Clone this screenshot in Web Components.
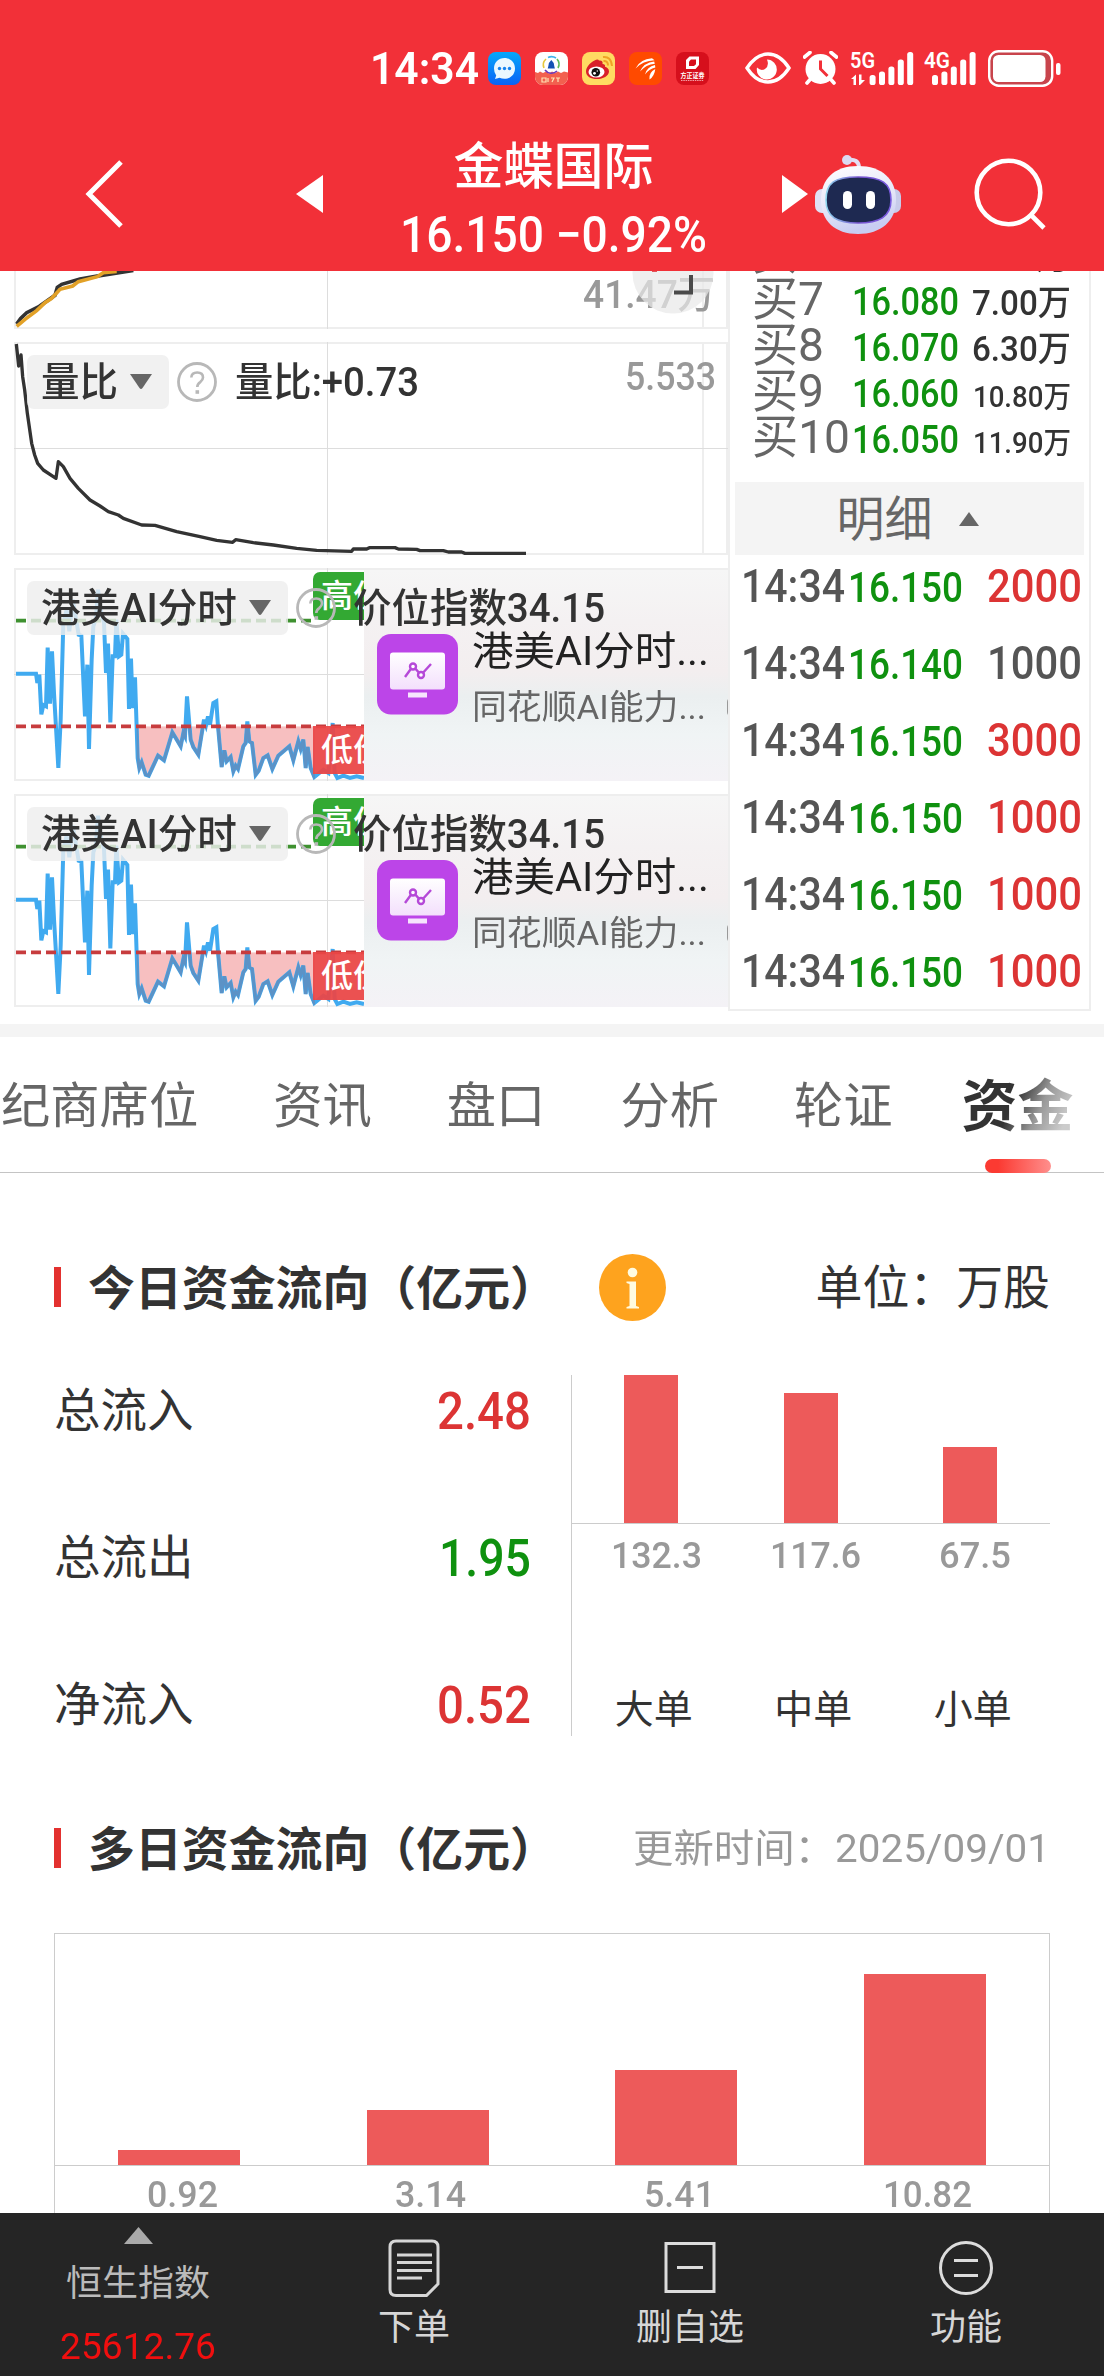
<!DOCTYPE html>
<html lang="zh-CN">
<head>
<meta charset="UTF-8">
<title>金蝶国际</title>
<style>
  html, body { margin: 0; padding: 0; }
  body {
    width: 1104px;
    height: 2376px;
    overflow: hidden;
    background: #fff;
    color: #333;
    font-family: Roboto, "Noto Sans CJK SC", sans-serif;
    line-height: 1;
  }
</style>
</head>
<body>
<stock-app></stock-app>

<script>
// 公共基类：把样式和模板写进 shadow root
class BaseElement extends HTMLElement {
  constructor() {
    super();
    this.attachShadow({ mode: 'open' });
  }
  connectedCallback() {
    this.shadowRoot.innerHTML = `<style>:host{display:block;box-sizing:border-box}*{box-sizing:border-box}svg{display:block;flex:none}${this.css()}</style>${this.html()}`;
  }
  css() { return ''; }
  html() { return ''; }
}

// 定宽文字：按 w 横向压缩，数字用窄体效果
class FitText extends HTMLElement {
  constructor() {
    super();
    this.attachShadow({ mode: 'open' });
    this.shadowRoot.innerHTML = `
      <style>
        :host { display: inline-block; white-space: nowrap; line-height: 1; flex: none; }
        span { display: inline-block; transform-origin: 0 50%; }
      </style>
      <span><slot></slot></span>
    `;
  }
  connectedCallback() {
    const w = Number(this.getAttribute('w'));
    const span = this.shadowRoot.querySelector('span');
    this.style.width = w + 'px';
    span.style.transform = `scaleX(${w / span.getBoundingClientRect().width})`;
  }
}

class StatusBar extends BaseElement {
  css() {
    return `
      :host { display: flex; align-items: center; height: 117px; padding: 19px 0 0 370px; color: #fff; }
      fit-text { font-size: 45px; font-weight: 600; }
      .apps { display: flex; gap: 14px; margin-left: 9px; }
      .eye { margin-left: 36px; }
      .gap { margin-left: 12px; }
      text { font-family: Roboto, "Noto Sans CJK SC", sans-serif; }
    `;
  }
  bars(x, tops) {
    return tops.map((t, i) => `<rect x="${x + i * 9.4}" y="${t}" width="6" height="${34 - t}" rx="2.6"/>`).join('');
  }
  html() {
    return `
      <fit-text w="109">14:34</fit-text>
      <div class="apps">
        <svg width="33" height="33" viewBox="0 0 33 33">
          <defs><linearGradient id="b" x2="0" y2="1"><stop stop-color="#06a8fb"/><stop offset="1" stop-color="#0a62f5"/></linearGradient></defs>
          <rect width="33" height="33" rx="8" fill="url(#b)"/>
          <path d="M16.500 6C10.500 6 6 10.500 6 16.500q0 4 2.200 7l-1.200 3.600 4.500-1.300q2.500 1 5 1C22.500 26.800 27 22.500 27 16.500S22.500 6 16.500 6z" fill="#eaf8ff"/>
          <g fill="#1482ee"><circle cx="11.500" cy="16.500" r="1.700"/><circle cx="16.500" cy="16.500" r="1.700"/><circle cx="21.500" cy="16.500" r="1.700"/></g>
        </svg>
        <svg width="33" height="33" viewBox="0 0 33 33">
          <rect width="33" height="33" rx="8" fill="#fff"/>
          <path d="M0 20l3 1 2-1.500 3 1.500 3-1.500 3 2 3-2 3 1.500 3-1.500 3 1.500 3-1.500 4 1V25a8 8 0 0 1-8 8H8a8 8 0 0 1-8-8z" fill="#f2604f"/>
          <g fill="none" stroke-width="1.600"><path d="M11 7a8 8 0 0 0-2 9" stroke="#e7c83d"/><path d="M13 5.500a8 8 0 0 1 8 .500" stroke="#3fb2e8"/><path d="M22 7a8 8 0 0 1 1 9" stroke="#5fbc5a"/><path d="M10 18a8 8 0 0 0 12 1" stroke="#6a3bbd"/></g>
          <path d="M16.300 8q3 2.500 3 6.200l.600 2.300h-7.200l.600-2.300q0-3.700 3-6.200z" fill="#1552b4"/>
          <path d="M7 26h4v4H7zM13 26v4m3-4h3l-2 4m4-4h4m-2 0v4" stroke="#ffe3b5" fill="none" stroke-width="1.200"/>
        </svg>
        <svg width="33" height="33" viewBox="0 0 33 33">
          <rect width="33" height="33" rx="8" fill="#ffdb62"/>
          <path d="M20.500 12q.800-4-3.500-3.500-1-2-4.500 0C7.500 11 4 15.500 4 19.500 4 24.500 9 27 15 27s12-3.300 12-7.600c0-3-2.200-4.200-4-4.700q.500-2.700-2.500-2.700z" fill="#d9202a"/>
          <ellipse cx="14.500" cy="20" rx="8" ry="5.600" fill="#fff"/>
          <circle cx="13.800" cy="20.300" r="4.300" fill="#111"/><circle cx="12.500" cy="21.300" r="1.400" fill="#fff"/><circle cx="15.300" cy="19" r=".7" fill="#fff"/>
          <path d="M21 5q8-1 9 9M21.500 9q4.500-.300 4.500 4.500" fill="none" stroke="#f0a325" stroke-width="2"/>
        </svg>
        <svg width="33" height="33" viewBox="0 0 33 33">
          <rect width="33" height="33" rx="8" fill="#ff4a00"/>
          <g fill="#fff">
            <path d="M6.500 16.500Q11 7 23 6.200l2.500 2Q14 8.500 6.500 16.500z"/>
            <path d="M11 19.500Q15 10.500 25.200 9.500l.600 2.200Q17 12.500 11 19.500z"/>
            <path d="M16 22.500Q18 14.500 26 13l.300 2.600Q20 17 16 22.500z"/>
            <path d="M20.500 27.500Q19.500 20.500 26.300 17 25.500 24 20.500 27.500z"/>
          </g>
        </svg>
        <svg width="33" height="33" viewBox="0 0 33 33">
          <rect width="33" height="33" rx="8" fill="#d60f1c"/>
          <path d="M13.500 4.500H23v8.500l-3.500 4H10V8z" fill="#fff"/><path d="M15 7.500h5v4.800L18 14h-5V9.500z" fill="#d60f1c"/>
          <text x="4.500" y="26" font-size="6.500" font-weight="700" fill="#fff" textLength="24" lengthAdjust="spacingAndGlyphs">方正证券</text>
          <path d="M5 28.500h23" stroke="#f2a0a5" stroke-width="1" stroke-dasharray="1.500 .8"/>
        </svg>
      </div>
      <svg class="eye" width="46" height="32" viewBox="0 0 46 32">
        <path d="M2 16Q11 2 23 2t21 14Q35 30 23 30T2 16z" fill="none" stroke="#fff" stroke-width="3.400"/>
        <path d="M22 7.500a10 10 0 1 1-10 8q4 4 8 1.500 4.500-3 2-9.500z" fill="#fff"/>
      </svg>
      <svg class="gap" width="35" height="34" viewBox="0 0 35 34">
        <circle cx="17.500" cy="18" r="15" fill="#fff"/>
        <path d="M1.500 6L7 1.500M28 1.500L33.500 6M7.500 28L4 32M27.500 28l3.500 4" stroke="#fff" stroke-width="3.600" stroke-linecap="round"/>
        <path d="M17.500 9.500V18l7 7" fill="none" stroke="#f23038" stroke-width="3"/>
      </svg>
      <svg class="gap" width="63" height="34" viewBox="0 0 63 34" fill="#fff" style="overflow:visible">
        <text x="0" y="16.500" font-size="22" font-weight="600" textLength="25" lengthAdjust="spacingAndGlyphs">5G</text>
        <path d="M1 28l5-4.500V34H3.500v-6zM9 23.500h2.500V29H15l-5 5H9z"/>
        ${this.bars(19.600, [24, 20.500, 15.500, 8.500, 1])}
      </svg>
      <svg style="margin-left:11px;overflow:visible" width="53" height="34" viewBox="0 0 53 34" fill="#fff">
        <text x="0" y="16.500" font-size="22" font-weight="600" textLength="26" lengthAdjust="spacingAndGlyphs">4G</text>
        ${this.bars(8, [24, 20.500, 15.500, 8.500, 1])}
      </svg>
      <svg style="margin-left:11px" width="73" height="37" viewBox="0 0 73 37">
        <rect x="1.200" y="1.200" width="63" height="34.500" rx="9.500" fill="#c8444c" stroke="#fff" stroke-width="2.400"/>
        <rect x="5" y="5" width="52.500" height="27" rx="5.500" fill="#fff"/>
        <rect x="68" y="13" width="4.500" height="12" rx="2" fill="#fff"/>
      </svg>
    `;
  }
}

class StockHeader extends BaseElement {
  css() {
    return `
      :host { height: 271px; background: #f23038; color: #fff; }
      nav { display: flex; align-items: center; height: 154px; padding-left: 85px; }
      .title { display: flex; flex-direction: column; align-items: center; gap: 18px; width: 309px; margin-left: 76px; padding-top: 14px; }
      .name { font-size: 50px; font-weight: 500; white-space: nowrap; }
      fit-text { font-size: 50px; font-weight: 500; }
    `;
  }
  html() {
    return `
      <status-bar></status-bar>
      <nav>
        <svg width="38" height="68" viewBox="0 0 38 68"><path d="M36 2L4 34l32 32" fill="none" stroke="#fff" stroke-width="5"/></svg>
        <svg style="margin-left:173px" width="27" height="40" viewBox="0 0 27 40"><path d="M27 1v38L0 20z" fill="#fff"/></svg>
        <div class="title">
          <span class="name">金蝶国际</span>
          <fit-text w="307">16.150 −0.92%</fit-text>
        </div>
        <svg style="margin-left:74px" width="27" height="40" viewBox="0 0 27 40"><path d="M0 1v38l26-19z" fill="#fff"/></svg>
        <svg style="margin-left:5px" width="88" height="84" viewBox="0 0 88 84">
          <defs>
            <linearGradient id="head" x2=".3" y2="1"><stop stop-color="#fff"/><stop offset=".6" stop-color="#e6e6f8"/><stop offset="1" stop-color="#c8cdf2"/></linearGradient>
            <linearGradient id="rim"><stop stop-color="#8fd6ee"/><stop offset=".5" stop-color="#7654cf"/><stop offset="1" stop-color="#7a5be0"/></linearGradient>
          </defs>
          <path d="M33 8q12-2 12 8" fill="none" stroke="#e3ddf3" stroke-width="4"/>
          <circle cx="33" cy="8" r="5" fill="#dcdaf2"/>
          <rect x="1" y="37" width="15" height="24" rx="7" fill="#dfe1f5"/><rect x="72" y="37" width="15" height="24" rx="7" fill="#c7cbea"/>
          <path d="M44 14c24 0 38 13 38 34S67 82 44 82 7 69 7 48s13-34 37-34z" fill="url(#head)"/>
          <path d="M44 25c24 0 33 6 33 23S65 71 44 71 12 65 12 48s8-23 32-23z" fill="#1e2951" stroke="url(#rim)" stroke-width="1.600"/>
          <rect x="29" y="39" width="9" height="18" rx="4.500" fill="#fff"/><rect x="52" y="39" width="9" height="18" rx="4.500" fill="#fff"/>
        </svg>
        <svg style="margin-left:71px" width="74" height="74" viewBox="0 0 74 74" fill="none" stroke="#fff" stroke-width="4.600">
          <circle cx="35.500" cy="35.500" r="31.800"/><path d="M58 58l13 13"/>
        </svg>
      </nav>
    `;
  }
}

// 图表上的指标标签行
class IndicatorLabel extends BaseElement {
  css() {
    return `
      :host { display: flex; align-items: center; height: 54px; color: #333; }
      .pill { display: flex; align-items: center; height: 54px; padding: 0 17px 0 14px; border-radius: 7px; background: rgba(238,238,238,.82); }
      fit-text { font-size: 40px; font-weight: 500; padding-top: 2px; }
      .arrow { margin-left: 12px; }
      .help { margin-left: 8px; }
    `;
  }
  html() {
    return `
      <div class="pill">
        <fit-text w="${this.getAttribute('name-width')}">${this.getAttribute('name')}</fit-text>
        <svg class="arrow" width="22" height="16" viewBox="0 0 22 16"><path d="M0 0h22L12.500 14q-1.500 2-3 0z" fill="#666"/></svg>
      </div>
      <svg class="help" width="40" height="40" viewBox="0 0 40 40" fill="none" stroke="#b8b8b8">
        <circle cx="20" cy="20" r="18.500" stroke-width="2.800"/>
        <path d="M14.300 15.500q.300-5 5.900-5 5.800 0 5.800 5 0 2.500-2.800 4.600-2.900 2-2.900 5" stroke-width="2.600"/><path d="M18.500 30h3.600" stroke-width="3.600"/>
      </svg>
      <fit-text style="margin-left:${this.getAttribute('gap')}px" w="${this.getAttribute('value-width')}">${this.getAttribute('value')}</fit-text>
    `;
  }
}

const grid = (top, bottom) => `
  <g fill="none" stroke="#eee" stroke-width="6">
    <path d="M42 ${top + 3}H2184M42 ${bottom - 3}H2184M45 ${top}V${bottom}M2109 ${top}V${bottom}M2181 ${top}V${bottom}"/>
    <path d="M982.500 ${top}V${bottom}M42 ${(top + bottom) / 2}H2184" stroke="#ddd" stroke-width="3"/>
  </g>`;

class VolumeChart extends BaseElement {
  css() {
    return `
      :host { position: relative; height: 58px; overflow: hidden; color: #999; }
      fit-text { position: absolute; left: 569px; top: 5px; font-size: 39px; font-weight: 500; }
      .float { position: absolute; left: 618px; top: 0; }
    `;
  }
  html() {
    return `
      <svg width="714" height="58" viewBox="42 33 2142 174">
        <path d="M45 33V207M2109 33V207M2181 33V207M42 204H2184" stroke="#eee" stroke-width="6"/>
        <path d="M982.500 33V207" stroke="#ddd" stroke-width="3"/>
        <path d="M50 192L62 175 80 158 118 139 165 106 172 82 185 73 240 57 300 47 400 31" fill="none" stroke="#333" stroke-width="11"/>
        <path d="M50 199L75 178 110 152 135 128 155 115 180 88 218 78 235 65 292 50 310 38 350 34" fill="none" stroke="#e2a127" stroke-width="11"/>
      </svg>
      <fit-text w="132">41.47万</fit-text>
      <svg class="float" width="82" height="44" viewBox="0 0 82 44">
        <circle cx="41" cy="2" r="40.500" fill="#e8e8e8" fill-opacity=".7"/>
        <path d="M42 21.500H59V4" fill="none" stroke="#4a4a4a" stroke-width="4"/>
        <path d="M20 0h5" stroke="#e0555b" stroke-width="2"/>
      </svg>
    `;
  }
}

class RatioChart extends BaseElement {
  css() {
    return `
      :host { position: relative; height: 213px; }
      indicator-label { position: absolute; left: 13px; top: 13px; }
      .max { position: absolute; right: 12px; top: 16px; font-size: 39px; font-weight: 500; color: #999; }
    `;
  }
  html() {
    return `
      <svg width="714" height="213" viewBox="42 246 2142 639">
        ${grid(246, 885)}
        <path d="M49 252L56 318 63 285 68 350 74 390 82 460 95 550 104 585 113 610 130 630 168 655 175 605 190 620 210 655 235 685 270 720 300 738 325 755 355 765 370 775 425 795 465 796 530 815 600 830 650 841 698 847 707 839 760 848 820 855 890 865 950 871 1055 874 1060 867 1100 867 1108 863 1185 863 1195 867 1250 868 1260 872 1330 872 1345 876 1385 876 1395 880 1578 880" fill="none" stroke="#333" stroke-width="10" stroke-linejoin="round"/>
      </svg>
      <indicator-label name="量比" name-width="77" value="量比:+0.73" value-width="184" gap="18"></indicator-label>
      <fit-text class="max" w="91">5.533</fit-text>
    `;
  }
}

class AiChart extends BaseElement {
  css() {
    return `
      :host { position: relative; height: 213px; }
      indicator-label { position: absolute; left: 13px; top: 13px; }
      .badge { position: absolute; left: 299px; width: 51px; height: 48px; overflow: hidden; padding: 8px 0 0 8px; font-size: 32px; font-weight: 500; color: #fff; white-space: nowrap; }
      .high { top: 4px; background: #33a933; border-radius: 7px 0 0 7px; }
      .low { top: 158px; background: rgba(234,70,70,.94); }
      .card {
        position: absolute; left: 350px; top: 0; width: 364px; height: 213px; overflow: hidden;
        display: flex; gap: 14px; padding: 64px 0 0 13px;
        background: linear-gradient(#f6f6f6, #f4f1f2 24%, #f3eeef 48%, #ebeff0 60%, #f0f4f5 78%, #f4f2f6);
        border-top: 2px solid #eee;
      }
      .lines { display: flex; flex-direction: column; gap: 18px; margin-top: -2px; }
      .lines :first-child { font-size: 40px; color: #222; }
      .lines :last-child { font-size: 34px; color: #666; }
      .tag { width: 20px; height: 20px; margin: 63px 0 0 4px; border: 2px solid #999; border-radius: 5px; flex: none; }
    `;
  }
  html() {
    // 曲线坐标为 3 倍像素
    const line = '48 342 108 342 112 370 118 345 124 464 130 436 138 440 143 264 150 432 156 275 162 400 175 625 182 480 190 190 200 150 208 215 218 120 230 190 236 225 244 228 255 470 262 315 267 568 275 300 280 200 288 175 294 90 302 150 312 190 318 340 324 252 331 488 338 290 345 290 349 180 357 290 364 285 369 222 382 238 387 448 393 297 398 445 405 353 413 595 418 625 425 608 437 645 446 648 474 588 492 602 517 518 542 560 550 520 555 530 561 410 572 540 580 562 595 585 608 505 612 480 618 497 624 470 630 495 640 430 649 425 654 500 665 622 673 572 680 605 692 592 700 635 707 618 714 628 730 560 737 550 742 485 748 545 756 550 767 645 776 633 790 595 803 587 817 628 835 588 868 560 880 602 895 545 902 568 910 540 917 625 923 562 932 625 943 652 970 630 985 640 998 490 1004 640 1012 655 1030 648 1050 655 1070 650 1092 655';
    return `
      <svg width="714" height="213" viewBox="42 25 2142 639">
        <defs><clipPath id="under"><rect x="410" y="500" width="535" height="160"/></clipPath></defs>
        ${grid(25, 664)}
        <polygon clip-path="url(#under)" points="48 500 ${line} 1092 500" fill="#f7bfc0"/>
        <polyline points="${line}" fill="none" stroke="#40aaf0" stroke-width="12"/>
        <polyline clip-path="url(#under)" points="${line}" fill="none" stroke="#6689b8" stroke-width="9" opacity=".75"/>
        <path d="M48 183H940" stroke="#3f9130" stroke-width="11" stroke-dasharray="30 15"/>
        <path d="M48 500H1092" stroke="#c73c3e" stroke-width="11" stroke-dasharray="30 15"/>
      </svg>
      <div class="badge high">高价</div>
      <div class="badge low">低价</div>
      <div class="card">
        <svg width="81" height="81" viewBox="0 0 81 81">
          <defs><linearGradient id="m" x2="0" y2="1"><stop stop-color="#fff"/><stop offset="1" stop-color="#f3dffc"/></linearGradient></defs>
          <rect width="81" height="80.500" rx="14" fill="#bc45e8"/>
          <rect x="13" y="18.500" width="55" height="37" rx="3" fill="url(#m)"/><rect x="31" y="58.500" width="19" height="5" fill="#f6e4fd"/>
          <g fill="#fff" stroke="#b549d8" stroke-width="2.400"><path d="M28 43l8-11 8 9 10-11" fill="none"/><circle cx="36" cy="32.500" r="3"/><circle cx="44" cy="41" r="3"/></g>
        </svg>
        <div class="lines"><fit-text w="237">港美AI分时...</fit-text><fit-text w="234">同花顺AI能力...</fit-text></div>
        <i class="tag"></i>
      </div>
      <indicator-label name="港美AI分时" name-width="196" value="价位指数34.15" value-width="252" gap="17"></indicator-label>
    `;
  }
}

class OrderBook extends BaseElement {
  css() {
    return `
      :host { width: 363px; height: 740px; overflow: hidden; border: 2px solid #eee; border-top: 0; }
      .bids { margin-top: -42px; height: 253px; }
      .bid { display: grid; grid-template-columns: 100px 120px 1fr; align-items: baseline; height: 46px; padding: 0 18px 0 22px; line-height: 46px; }
      .bid .label { font-size: 47px; color: #666; white-space: nowrap; }
      .bid .price { font-size: 39px; font-weight: 500; color: #0f910f; }
      .bid .vol { font-weight: 500; justify-self: end; }
      .head { display: flex; justify-content: center; align-items: center; gap: 26px; height: 73px; margin: 0 5px; padding: 3px 4px 0 0; background: #f4f4f4; color: #666; font-size: 48px; }
      .head svg { margin-top: -3px; }
      .trade { display: flex; align-items: baseline; height: 77px; padding: 7px 7px 0 11px; font-size: 47px; }
      .trade .price { margin-left: 3px; font-size: 42px; font-weight: 500; color: #0f910f; }
      .time { color: #555; font-weight: 500; }
      .vol2 { margin-left: auto; }
    `;
  }
  html() {
    const bids = [['买6', '', '万', 35, 35], ['买7', '16.080', '7.00万', 35, 99], ['买8', '16.070', '6.30万', 35, 99], ['买9', '16.060', '10.80万', 30, 98], ['买10', '16.050', '11.90万', 30, 98]];
    const trades = [['16.150', '2000', '#dc3434'], ['16.140', '1000', '#555'], ['16.150', '3000', '#dc3434'], ['16.150', '1000', '#dc3434'], ['16.150', '1000', '#dc3434'], ['16.150', '1000', '#dc3434']];
    return `
      <div class="bids">
        ${bids.map(([n, p, v, size, w]) => `
          <div class="bid">
            <fit-text class="label" w="${n.length > 2 ? 98 : 72}">${n}</fit-text>
            ${p ? `<fit-text class="price" w="107">${p}</fit-text>` : '<span></span>'}
            <fit-text class="vol" style="font-size:${size}px" w="${w}">${v}</fit-text>
          </div>`).join('')}
      </div>
      <div class="head">明细<svg width="20" height="14" viewBox="0 0 20 14"><path d="M10 0l10 14H0z" fill="#666"/></svg></div>
      ${trades.map(([p, v, c]) => `
        <div class="trade">
          <fit-text class="time" w="104">14:34</fit-text>
          <fit-text class="price" w="115">${p}</fit-text>
          <fit-text class="vol2" style="color:${c};font-weight:500" w="95">${v}</fit-text>
        </div>`).join('')}
    `;
  }
}

class QuotePanel extends BaseElement {
  css() {
    return `
      :host { display: flex; height: 766px; padding-left: 14px; border-bottom: 13px solid #f4f4f4; }
      .charts { display: flex; flex-direction: column; width: 714px; gap: 13px; }
    `;
  }
  html() {
    return `
      <div class="charts">
        <volume-chart></volume-chart>
        <ratio-chart></ratio-chart>
        <ai-chart></ai-chart>
        <ai-chart></ai-chart>
      </div>
      <order-book></order-book>
    `;
  }
}

class TabBar extends BaseElement {
  css() {
    return `
      :host { display: flex; align-items: center; gap: 75px; height: 136px; padding: 4px 0 0 1px; border-bottom: 1px solid #c4c4c4; font-size: 49.300px; color: #666; white-space: nowrap; }
      .active { position: relative; margin-left: -6px; font-size: 56px; font-weight: 700; }
      .active span { color: transparent; background: linear-gradient(115deg, #333 45%, #999 66%, #ccc 88%); -webkit-background-clip: text; background-clip: text; }
      .active i { position: absolute; left: 23px; bottom: -38px; width: 66px; height: 14px; border-radius: 7px; background: linear-gradient(90deg, #fb3a32 20%, #ff8f8d); }
    `;
  }
  html() {
    return `
      <span>纪商席位</span><span>资讯</span><span>盘口</span><span>分析</span><span>轮证</span>
      <div class="active"><span>资金</span><i></i></div>
    `;
  }
}

class SectionTitle extends BaseElement {
  css() {
    return `
      :host { display: flex; align-items: center; height: 68px; font-size: 46.900px; }
      i { width: 7px; height: 40px; background: #e3312f; margin-right: 27px; }
      b { font-weight: 700; white-space: nowrap; padding-top: 4px; }
      .side { flex: 1; display: flex; align-items: center; }
    `;
  }
  html() {
    return `<i></i><b><slot></slot></b><div class="side"><slot name="side"></slot></div>`;
  }
}

class FundFlow extends BaseElement {
  css() {
    return `
      :host { padding: 80px 54px 0; }
      .info { margin-left: 42px; }
      .today { display: flex; height: 361px; margin-top: 54px; }
      .totals { display: flex; flex-direction: column; width: 518px; padding: 10px 40px 0 0; border-right: 1px solid #ccc; }
      .totals div { display: flex; justify-content: space-between; align-items: center; height: 53px; margin-bottom: 94px; font-size: 46.500px; }
      .totals fit-text { font-size: 52px; font-weight: 500; padding-top: 1px; }
      .bars { display: grid; grid-template-columns: repeat(3, 159.500px); flex: 1; }
      .bars > div { display: flex; flex-direction: column; align-items: center; }
      .plot { display: flex; align-items: flex-end; justify-content: center; width: 160px; height: 149px; border-bottom: 1px solid #ccc; }
      .bar { background: #ed5a5a; }
      .num { margin: 13px 0 0 10px; font-size: 37px; font-weight: 500; color: #999; }
      .kind { margin: 117px 0 0 5px; font-size: 39px; }
      .date { font-size: 38.500px; color: #999; padding-top: 2px; }
      .multi { display: grid; grid-template-columns: repeat(4, 1fr); margin-top: 51px; height: 290px; border: 1px solid #ccc; border-bottom: 0; }
      .multi > div { display: flex; flex-direction: column; align-items: center; }
      .multi .plot { width: 100%; height: 232px; }
      .multi .num { margin: 10px 0 0 6px; }
    `;
  }
  html() {
    const totals = [['总流入', '2.48', '#dc3434', 94], ['总流出', '1.95', '#0f910f', 92], ['净流入', '0.52', '#dc3434', 94]];
    const orders = [['大单', '132.3', 148, 91], ['中单', '117.6', 130, 91], ['小单', '67.5', 76, 72]];
    const days = [['0.92', 15, 71], ['3.14', 55, 71], ['5.41', 95, 71], ['10.82', 191, 89]];
    return `
      <section-title>今日资金流向（亿元）
        <svg slot="side" class="info" width="67" height="67" viewBox="0 0 67 67">
          <circle cx="33.500" cy="33.500" r="33.500" fill="#fea31e"/>
          <circle cx="33.500" cy="18.500" r="4.800" fill="#fffbe0"/>
          <path d="M27.500 27.500h9.500v24.500l3 1v1.500H27.500v-1.500l3-1V30l-3-1z" fill="#fffbe0"/>
        </svg>
        <span slot="side" style="margin-left:auto;padding-top:3px;white-space:nowrap">单位：万股</span>
      </section-title>
      <div class="today">
        <div class="totals">${totals.map(([k, v, c, w]) => `<div>${k}<fit-text style="color:${c}" w="${w}">${v}</fit-text></div>`).join('')}</div>
        <div class="bars">${orders.map(([k, v, h, w]) => `
          <div>
            <div class="plot"><div class="bar" style="width:54px;height:${h}px"></div></div>
            <fit-text class="num" w="${w}">${v}</fit-text>
            <span class="kind">${k}</span>
          </div>`).join('')}</div>
      </div>
      <section-title style="margin-top:78px">多日资金流向（亿元）
        <fit-text slot="side" class="date" style="margin-left:auto" w="417">更新时间：2025/09/01</fit-text>
      </section-title>
      <div class="multi">${days.map(([v, h, w]) => `
        <div>
          <div class="plot"><div class="bar" style="width:122px;height:${h}px"></div></div>
          <fit-text class="num" w="${w}">${v}</fit-text>
        </div>`).join('')}</div>
    `;
  }
}

class BottomBar extends BaseElement {
  css() {
    return `
      :host { position: absolute; left: 0; top: 2213px; width: 1104px; height: 163px; display: grid; grid-template-columns: repeat(4, 276px); background: #252525; color: #d6d6d6; font-size: 36px; }
      div { display: flex; flex-direction: column; align-items: center; }
      .index { color: #bbb; padding-top: 14px; }
      .index span { margin-top: 22px; }
      .index fit-text { margin-top: 26px; font-size: 37px; color: #f00f0f; }
      .item { padding-top: 25px; }
      .item span { margin-top: 12px; }
    `;
  }
  html() {
    return `
      <div class="index">
        <svg width="29" height="17" viewBox="0 0 29 17"><path d="M14.500 0L29 17H0z" fill="#aaa"/></svg>
        <span>恒生指数</span>
        <fit-text w="156">25612.76</fit-text>
      </div>
      <div class="item">
        <svg width="52" height="60" viewBox="0 0 52 60" fill="none" stroke="#d6d6d6" stroke-width="3">
          <path d="M8 3h36q6 0 6 6v37L38.500 57.500H8q-6 0-6-6V9q0-6 6-6z"/>
          <path d="M9 17h35M9 24.500h35M9 32.500h35M9 40h25"/>
        </svg>
        <span>下单</span>
      </div>
      <div class="item">
        <svg width="52" height="60" viewBox="0 0 52 60" fill="none" stroke="#dcdcdc" stroke-width="3"><path d="M2 5.500h48v48H2zM13 29.500h26"/></svg>
        <span>删自选</span>
      </div>
      <div class="item">
        <svg width="56" height="60" viewBox="0 0 56 60" fill="none" stroke="#dcdcdc" stroke-width="3"><circle cx="28" cy="30" r="25.500"/><path d="M16 22.500h24M16 37.500h24"/></svg>
        <span>功能</span>
      </div>
    `;
  }
}

class StockApp extends BaseElement {
  css() { return ':host { position: relative; width: 1104px; height: 2376px; overflow: hidden; }'; }
  html() {
    return `
      <stock-header></stock-header>
      <quote-panel></quote-panel>
      <tab-bar></tab-bar>
      <fund-flow></fund-flow>
      <bottom-bar></bottom-bar>
    `;
  }
}

customElements.define('fit-text', FitText);
customElements.define('status-bar', StatusBar);
customElements.define('stock-header', StockHeader);
customElements.define('indicator-label', IndicatorLabel);
customElements.define('volume-chart', VolumeChart);
customElements.define('ratio-chart', RatioChart);
customElements.define('ai-chart', AiChart);
customElements.define('order-book', OrderBook);
customElements.define('quote-panel', QuotePanel);
customElements.define('tab-bar', TabBar);
customElements.define('section-title', SectionTitle);
customElements.define('fund-flow', FundFlow);
customElements.define('bottom-bar', BottomBar);
customElements.define('stock-app', StockApp);
</script>
</body>
</html>
